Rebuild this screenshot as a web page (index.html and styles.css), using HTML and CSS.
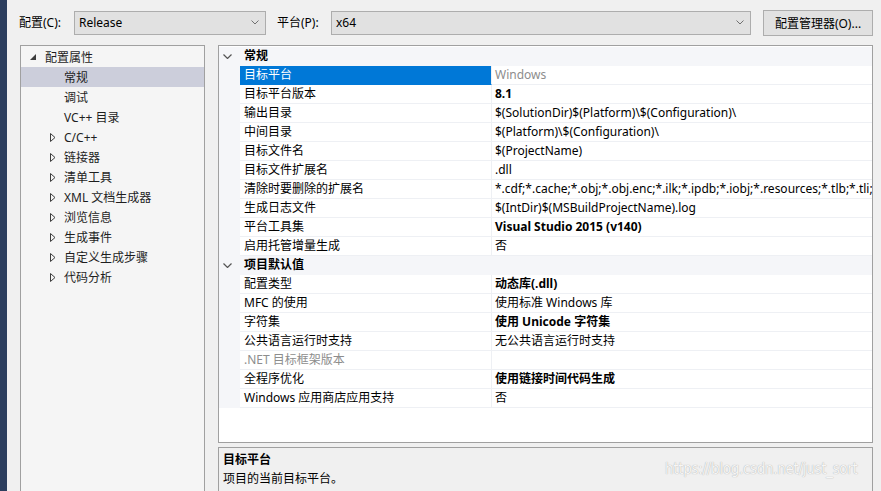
FILE: index.html
```html
<!DOCTYPE html>
<html lang="zh-CN">
<head>
<meta charset="utf-8">
<title>属性页</title>
<link rel="stylesheet" href="styles.css">
</head>
<body>
<div class="window">
  <div class="edge"></div>
  <div class="main">
    <div class="toolbar">
      <span class="lbl lbl-config">配置(C):</span>
      <div class="combo combo-config">
        <span class="combo-text">Release</span>
        <svg class="chev" width="8" height="5" viewBox="0 0 8 5"><polyline points="0.5,0.5 4,4 7.5,0.5" fill="none" stroke="#707070" stroke-width="1"/></svg>
      </div>
      <span class="lbl lbl-platform">平台(P):</span>
      <div class="combo combo-platform">
        <span class="combo-text">x64</span>
        <svg class="chev" width="8" height="5" viewBox="0 0 8 5"><polyline points="0.5,0.5 4,4 7.5,0.5" fill="none" stroke="#707070" stroke-width="1"/></svg>
      </div>
      <div class="btn">配置管理器(O)...</div>
    </div>
    <div class="content">
      <div class="tree">
        <div class="trow lvl0">
          <span class="tw"><svg width="6" height="6" viewBox="0 0 6 6"><polygon points="6,0 6,6 0,6" fill="#3c3c3c"/></svg></span>
          <span>配置属性</span>
        </div>
        <div class="trow leaf sel"><span>常规</span></div>
        <div class="trow leaf"><span>调试</span></div>
        <div class="trow leaf"><span>VC++ 目录</span></div>
        <div class="trow lvl1"><span class="tw"><svg width="6" height="9" viewBox="0 0 6 9"><polygon points="0.5,0.5 5,4.5 0.5,8.5" fill="none" stroke="#3c3c3c"/></svg></span><span>C/C++</span></div>
        <div class="trow lvl1"><span class="tw"><svg width="6" height="9" viewBox="0 0 6 9"><polygon points="0.5,0.5 5,4.5 0.5,8.5" fill="none" stroke="#3c3c3c"/></svg></span><span>链接器</span></div>
        <div class="trow lvl1"><span class="tw"><svg width="6" height="9" viewBox="0 0 6 9"><polygon points="0.5,0.5 5,4.5 0.5,8.5" fill="none" stroke="#3c3c3c"/></svg></span><span>清单工具</span></div>
        <div class="trow lvl1"><span class="tw"><svg width="6" height="9" viewBox="0 0 6 9"><polygon points="0.5,0.5 5,4.5 0.5,8.5" fill="none" stroke="#3c3c3c"/></svg></span><span>XML 文档生成器</span></div>
        <div class="trow lvl1"><span class="tw"><svg width="6" height="9" viewBox="0 0 6 9"><polygon points="0.5,0.5 5,4.5 0.5,8.5" fill="none" stroke="#3c3c3c"/></svg></span><span>浏览信息</span></div>
        <div class="trow lvl1"><span class="tw"><svg width="6" height="9" viewBox="0 0 6 9"><polygon points="0.5,0.5 5,4.5 0.5,8.5" fill="none" stroke="#3c3c3c"/></svg></span><span>生成事件</span></div>
        <div class="trow lvl1"><span class="tw"><svg width="6" height="9" viewBox="0 0 6 9"><polygon points="0.5,0.5 5,4.5 0.5,8.5" fill="none" stroke="#3c3c3c"/></svg></span><span>自定义生成步骤</span></div>
        <div class="trow lvl1"><span class="tw"><svg width="6" height="9" viewBox="0 0 6 9"><polygon points="0.5,0.5 5,4.5 0.5,8.5" fill="none" stroke="#3c3c3c"/></svg></span><span>代码分析</span></div>
      </div>
      <div class="right">
        <div class="grid">
          <div class="grow group">
            <span class="m"><svg width="9" height="5" viewBox="0 0 9 5"><polyline points="0.5,0.5 4.5,4.5 8.5,0.5" fill="none" stroke="#555" stroke-width="1.2"/></svg></span>
            <span class="gname">常规</span>
          </div>
          <div class="grow sel"><span class="m"></span><span class="n">目标平台</span><span class="v ro">Windows</span></div>
          <div class="grow"><span class="m"></span><span class="n">目标平台版本</span><span class="v b">8.1</span></div>
          <div class="grow"><span class="m"></span><span class="n">输出目录</span><span class="v">$(SolutionDir)$(Platform)\$(Configuration)\</span></div>
          <div class="grow"><span class="m"></span><span class="n">中间目录</span><span class="v">$(Platform)\$(Configuration)\</span></div>
          <div class="grow"><span class="m"></span><span class="n">目标文件名</span><span class="v">$(ProjectName)</span></div>
          <div class="grow"><span class="m"></span><span class="n">目标文件扩展名</span><span class="v">.dll</span></div>
          <div class="grow"><span class="m"></span><span class="n">清除时要删除的扩展名</span><span class="v">*.cdf;*.cache;*.obj;*.obj.enc;*.ilk;*.ipdb;*.iobj;*.resources;*.tlb;*.tli;*.tlh;*.tmp;*.rsp;*.pgc;*.pgd;*.meta;*.tlog;*.manifest;*.res;*.pch;*.exp;*.idb;*.rep;*.xdc;*.pdb;*_manifest.rc;*.bsc;*.sbr;*.xml;*.metagen;*.bi</span></div>
          <div class="grow"><span class="m"></span><span class="n">生成日志文件</span><span class="v">$(IntDir)$(MSBuildProjectName).log</span></div>
          <div class="grow"><span class="m"></span><span class="n">平台工具集</span><span class="v b">Visual Studio 2015 (v140)</span></div>
          <div class="grow"><span class="m"></span><span class="n">启用托管增量生成</span><span class="v">否</span></div>
          <div class="grow group">
            <span class="m"><svg width="9" height="5" viewBox="0 0 9 5"><polyline points="0.5,0.5 4.5,4.5 8.5,0.5" fill="none" stroke="#555" stroke-width="1.2"/></svg></span>
            <span class="gname">项目默认值</span>
          </div>
          <div class="grow"><span class="m"></span><span class="n">配置类型</span><span class="v b">动态库(.dll)</span></div>
          <div class="grow"><span class="m"></span><span class="n">MFC 的使用</span><span class="v">使用标准 Windows 库</span></div>
          <div class="grow"><span class="m"></span><span class="n">字符集</span><span class="v b">使用 Unicode 字符集</span></div>
          <div class="grow"><span class="m"></span><span class="n">公共语言运行时支持</span><span class="v">无公共语言运行时支持</span></div>
          <div class="grow"><span class="m"></span><span class="n ro">.NET 目标框架版本</span><span class="v"></span></div>
          <div class="grow"><span class="m"></span><span class="n">全程序优化</span><span class="v b">使用链接时间代码生成</span></div>
          <div class="grow"><span class="m"></span><span class="n">Windows 应用商店应用支持</span><span class="v">否</span></div>
        </div>
        <div class="desc">
          <div class="desc-title">目标平台</div>
          <div class="desc-text">项目的当前目标平台。</div>
          <div class="watermark">https://blog.csdn.net/just_sort</div>
        </div>
      </div>
    </div>
  </div>
</div>
</body>
</html>
```
FILE: styles.css
```css
* { box-sizing: border-box; }
html, body {
  margin: 0;
  padding: 0;
  width: 881px;
  height: 491px;
  overflow: hidden;
  background: #f0f0f0;
}
body {
  font-family: "Noto Sans", "Noto Sans CJK SC", sans-serif;
  font-size: 12px;
  color: #000;
}
.window {
  display: flex;
  height: 491px;
}
.edge {
  width: 7px;
  flex: none;
  background: #2c3e5e;
}
.main {
  flex: 1;
  display: flex;
  flex-direction: column;
  padding: 10px 8px 0 12px;
  min-width: 0;
}
.toolbar {
  display: flex;
  align-items: center;
  height: 25px;
}
.lbl {
  flex: none;
  line-height: 24px;
}
.lbl-config { width: 55px; }
.lbl-platform { width: 54px; margin-left: 11px; }
.combo {
  height: 24px;
  border: 1px solid #adadad;
  background: #e1e1e1;
  display: flex;
  align-items: center;
  padding: 0 6px 0 4px;
  flex: none;
}
.combo-config { width: 192px; }
.combo-platform { flex: 1; }
.combo-text { flex: 1; }
.chev { flex: none; }
.btn {
  flex: none;
  margin-left: 12px;
  width: 110px;
  height: 26px;
  border: 1px solid #adadad;
  background: #e1e1e1;
  display: flex;
  align-items: center;
  justify-content: center;
}
.content {
  flex: 1;
  display: flex;
  margin-top: 10px;
  gap: 13px;
  padding-left: 1px;
}
.tree {
  width: 185px;
  flex: none;
  border: 1px solid #a0a0a0;
  border-bottom: none;
  background: #f5f5f5;
  padding-top: 1px;
}
.trow {
  height: 20px;
  display: flex;
  align-items: center;
  white-space: nowrap;
  color: #1e1e1e;
}
.trow.sel { background: #cccedb; }
.trow.lvl0 { padding-left: 9px; }
.trow.lvl0 .tw { width: 15px; }
.trow.lvl1 { padding-left: 29px; }
.trow.lvl1 .tw { width: 14px; }
.trow.leaf { padding-left: 43px; }
.tw { display: flex; align-items: center; flex: none; }
.right {
  flex: 1;
  display: flex;
  flex-direction: column;
  gap: 4px;
  min-width: 0;
}
.grid {
  height: 398px;
  flex: none;
  border: 1px solid #a0a0a0;
  background: #fff;
  padding-top: 1px;
  overflow: hidden;
}
.grow {
  display: flex;
  height: 19px;
  line-height: 18px;
  white-space: nowrap;
}
.grow .m {
  width: 21px;
  flex: none;
  background: #f5f6f9;
  display: flex;
  align-items: center;
  justify-content: center;
  padding-right: 4px;
}
.grow .n {
  width: 252px;
  flex: none;
  padding-left: 4px;
  border-right: 1px solid #eef0f4;
  border-bottom: 1px solid #eef0f4;
  overflow: hidden;
}
.grow .v {
  flex: 1;
  padding-left: 3px;
  border-bottom: 1px solid #eef0f4;
  overflow: hidden;
  min-width: 0;
}
.grow.sel .n {
  background: #0078d7;
  color: #fff;
  border-bottom-color: #0078d7;
}
.ro { color: #8d8d8d; }
.b { font-weight: bold; }
.grow.group {
  background: #f5f6f9;
  height: 19px;
}
.gname {
  padding-left: 4px;
  font-weight: bold;
}
.desc {
  flex: 1;
  position: relative;
  border: 1px solid #a0a0a0;
  border-bottom: none;
  background: #f0f0f0;
  padding: 2px 4px;
  overflow: hidden;
}
.desc-title {
  font-weight: bold;
  line-height: 19px;
}
.desc-text {
  line-height: 19px;
}
.watermark {
  position: absolute;
  left: 446px;
  top: 12px;
  font-family: "Liberation Sans Narrow", "DejaVu Sans Condensed", sans-serif;
  font-size: 15px;
  letter-spacing: -0.3px;
  color: #f6f6f6;
  text-shadow: 0 0 1px #9a9a9a;
  white-space: nowrap;
}
```
